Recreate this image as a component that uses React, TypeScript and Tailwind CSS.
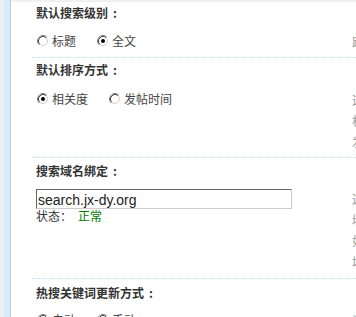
import React from "react";

function Radio({ checked }: { checked?: boolean }) {
  return (
    <svg width="12" height="12" viewBox="0 0 12 12" className="shrink-0">
      <circle cx="6" cy="6" r="5" fill="#fff" />
      <path d="M 2.11 9.89 A 5.5 5.5 0 0 1 9.89 2.11" stroke="#808080" strokeWidth="1" fill="none" />
      <path d="M 9.89 2.11 A 5.5 5.5 0 0 1 2.11 9.89" stroke="#ffffff" strokeWidth="1" fill="none" />
      <path d="M 2.82 9.18 A 4.5 4.5 0 0 1 9.18 2.82" stroke="#404040" strokeWidth="1" fill="none" />
      <path d="M 9.18 2.82 A 4.5 4.5 0 0 1 2.82 9.18" stroke="#d4d0c8" strokeWidth="1" fill="none" />
      {checked && <circle cx="6" cy="6" r="2" fill="#000" />}
    </svg>
  );
}

function Option({ label, checked }: { label: string; checked?: boolean }) {
  return (
    <div className="flex items-center mr-[21px]">
      <Radio checked={checked} />
      <span className="ml-[3px] text-[#444]">{label}</span>
    </div>
  );
}

function Heading({ text }: { text: string }) {
  return (
    <div className="pl-[4px] h-[18px] leading-[18px] text-[12px] font-bold text-[#333] whitespace-nowrap">
      {text}
      <span className="ml-[5px]">:</span>
    </div>
  );
}

function Tips({ lines }: { lines: string[] }) {
  return (
    <div className="text-[#999] leading-[21px] whitespace-nowrap">
      {lines.map((l, i) => (
        <div key={i}>{l}</div>
      ))}
    </div>
  );
}

export default function App() {
  return (
    <div className="flex w-[356px] h-[317px] overflow-hidden bg-white font-['Noto_Sans_CJK_SC',sans-serif] text-[12px]">
      <div className="flex shrink-0">
        <div className="w-[4px] bg-[#f0f0f0]" />
        <div className="w-[6px] bg-[#d6edfb]" />
        <div className="w-[1px] bg-[#c8c8c8]" />
      </div>
      <div className="flex-1 flex flex-col min-w-0">
        <div className="h-[2px] bg-[#f0f0f0] shrink-0" />
        <div className="pl-[21px]">
          {/* Section 1 */}
          <div className="pt-[2px] pb-[5px] border-b border-dotted border-[#bfe0f0]">
            <Heading text="默认搜索级别" />
            <div className="flex items-start mt-[9px]">
              <div className="w-[320px] shrink-0 pl-[5px] h-[20px] flex items-center">
                <Option label="标题" />
                <Option label="全文" checked />
              </div>
              <Tips lines={["跟据标题或全文进行搜索"]} />
            </div>
          </div>
          {/* Section 2 */}
          <div className="pt-[3px] pb-[5px] border-b border-dotted border-[#bfe0f0]">
            <Heading text="默认排序方式" />
            <div className="flex items-start mt-[10px]">
              <div className="w-[320px] shrink-0 pl-[5px] h-[20px] flex items-center">
                <Option label="相关度" checked />
                <Option label="发帖时间" />
              </div>
              <Tips lines={["这里设置搜索结果的默认排序", "相关度按匹配程度排序", "发帖时间按时间先后排序"]} />
            </div>
          </div>
          {/* Section 3 */}
          <div className="pt-[4px] pb-[6px] border-b border-dotted border-[#bfe0f0]">
            <Heading text="搜索域名绑定" />
            <div className="flex items-start mt-[8px]">
              <div className="w-[320px] shrink-0 pl-[4px]">
                <div className="mt-[1px] w-[256px] h-[20px] box-border border border-[#cccccc] border-t-[#666666] border-l-[#666666] pl-[1px] leading-[20px] text-[14px] text-[#222] font-['Liberation_Sans',Arial,sans-serif] overflow-hidden whitespace-nowrap">
                  search.jx-dy.org
                </div>
                <div className="leading-[13px] text-[#333] whitespace-nowrap">
                  状态：<span className="ml-[6px] text-[#008000]">正常</span>
                </div>
              </div>
              <Tips lines={["这里设置搜索使用的独立域名", "域名需要解析到本服务器", "如不需要请留空即可", "填写示例 search.com"]} />
            </div>
          </div>
          {/* Section 4 */}
          <div className="pt-[5px]">
            <Heading text="热搜关键词更新方式" />
            <div className="flex items-start mt-[8px]">
              <div className="w-[320px] shrink-0 pl-[5px] h-[20px] flex items-center">
                <Option label="自动" checked />
                <Option label="手动" />
              </div>
              <Tips lines={["设置热搜关键词的更新方式"]} />
            </div>
          </div>
        </div>
      </div>
    </div>
  );
}
